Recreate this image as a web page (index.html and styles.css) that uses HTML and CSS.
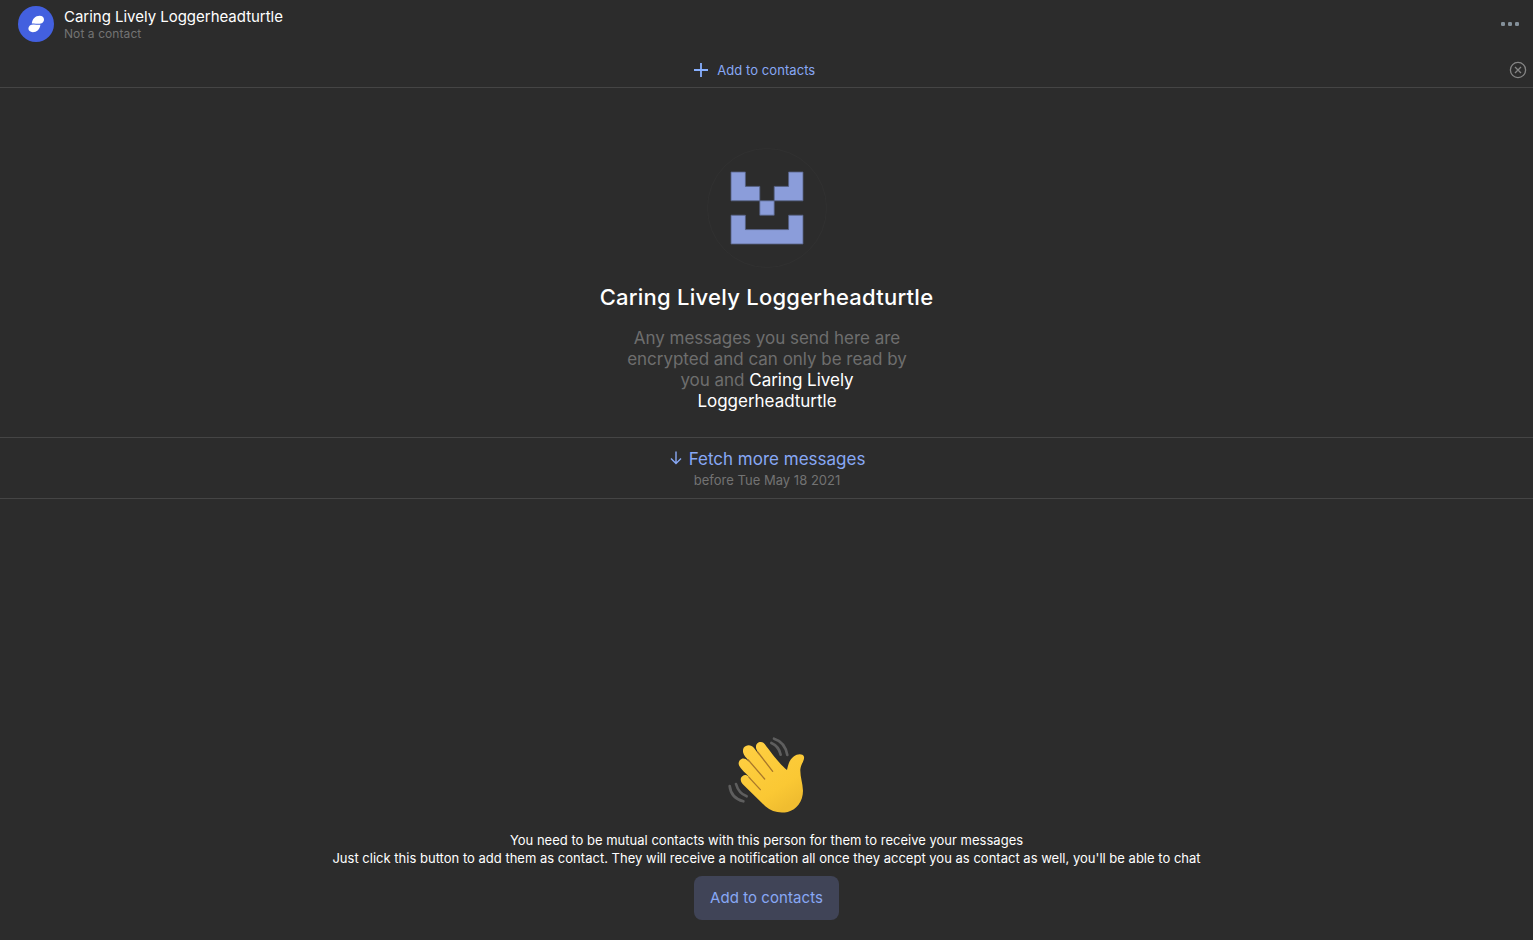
FILE: index.html
```html
<!DOCTYPE html>
<html lang="en">
<head>
<meta charset="utf-8">
<title>Chat</title>
<link rel="stylesheet" href="styles.css">
</head>
<body>
<div class="chat">
  <header class="toolbar">
    <svg class="avatar" viewBox="0 0 36 36"><circle cx="18" cy="18" r="18" fill="#4360df"/><path d="M13.8 17.6C14.2 13 17.4 9.8 21.6 9.8C24.4 9.8 26 11.3 26 13.4C26 16.2 23.6 18 20.2 17.8C17.6 17.6 16 17.1 13.8 17.6Z" fill="#fff"/><path d="M22.4 18.7C22 23.2 18.9 26.2 14.8 26.2C12.1 26.2 10.4 24.7 10.4 22.6C10.4 19.9 12.8 18.3 16 18.5C18.5 18.7 20.2 19.1 22.4 18.7Z" fill="#fff"/></svg>
    <div class="identity">
      <div class="name">Caring Lively Loggerheadturtle</div>
      <div class="status">Not a contact</div>
    </div>
    <svg class="more" viewBox="0 0 18 4"><rect width="4" height="4" rx="1.3"/><rect x="7" width="4" height="4" rx="1.3"/><rect x="14" width="4" height="4" rx="1.3"/></svg>
  </header>
  <div class="contact-bar">
    <div class="contact-add">
      <svg class="plus" viewBox="0 0 14 14"><path d="M7 0V14M0 7H14"/></svg>
      <span class="contact-label">Add to contacts</span>
    </div>
    <svg class="close" viewBox="0 0 18 18"><circle cx="9" cy="9" r="7.6"/><path d="M6 6L12 12M12 6L6 12"/></svg>
  </div>
  <section class="intro">
    <svg class="identicon" viewBox="0 0 120 120"><circle cx="60" cy="60" r="59.5" fill="none" stroke="#313131" stroke-width=".9"/><path d="M24 24H38.4V38.4H52.8V52.8H67.2V38.4H81.6V24H96V52.8H67.2V67.2H52.8V52.8H24ZM24 67.2H38.4V81.6H81.6V67.2H96V96H24Z" fill="#8b9dda" stroke="#566184" stroke-width=".8"/></svg>
    <h1 class="title">Caring Lively Loggerheadturtle</h1>
    <p class="notice">Any messages you send here are<br>encrypted and can only be read by<br>you and <span class="who">Caring Lively<br>Loggerheadturtle</span></p>
  </section>
  <section class="fetch">
    <div class="fetch-link"><svg class="arrow" viewBox="0 0 12 14"><path d="M6 0.5V12.5M1 7.5L6 12.5L11 7.5"/></svg><span class="fetch-label">Fetch more messages</span></div>
    <div class="before">before Tue May 18 2021</div>
  </section>
  <footer class="request">
    <svg class="wave" viewBox="0 0 300 300">
      <defs><linearGradient id="skin" x1="0" y1="0" x2=".6" y2="1"><stop offset="0" stop-color="#ffd044"/><stop offset=".75" stop-color="#fac834"/><stop offset="1" stop-color="#f0bd30"/></linearGradient></defs>
      <g fill="none" stroke="#5e5e5e" stroke-width="8" stroke-linecap="round"><path d="M171 38Q204 48 211 87"/><path d="M163 51Q186 61 191 86"/><path d="M38 180Q42 216 79 226"/><path d="M57 174Q65 202 89 211"/></g>
      <path d="M77 150C68 156 70 168 79 176L145 241C164 257 186 263 212 258C239 250 258 226 258 194C257 171 249 152 250 130C252 113 263 104 261 92C257 82 240 84 231 91C217 101 214 115 210 132C190 117 160 77 143 54C131 41 112 52 118 69L126 86L111 66C102 54 87 56 80 65C75 75 79 86 89 97L99 109L86 99C75 93 64 103 65 114C67 125 81 137 96 152L104 160L95 152C89 146 82 146 77 150Z" fill="url(#skin)"/>
      <g fill="none" stroke="#a9782a" stroke-width="4" stroke-linecap="round"><path d="M122 78L167 136"/><path d="M93 101L143 159"/><path d="M96 154L130 191"/></g>
    </svg>
    <p class="explain"><span class="line1">You need to be mutual contacts with this person for them to receive your messages</span><br><span class="line2">Just click this button to add them as contact. They will receive a notification all once they accept you as contact as well, you'll be able to chat</span></p>
    <button class="add-button">Add to contacts</button>
  </footer>
</div>
</body>
</html>
```
FILE: styles.css
```css
* { box-sizing: border-box; }
body { margin: 0; background: #2c2c2c; color: #fff; font-family: Inter, sans-serif; white-space: nowrap; }
svg { display: block; flex: none; }
p, h1 { margin: 0; }
.chat { height: 940px; display: flex; flex-direction: column; overflow: hidden; }
.toolbar { height: 52px; padding: 6px 14px 0 18px; display: flex; align-items: flex-start; }
.avatar { width: 36px; height: 36px; }
.identity { margin-left: 10px; flex: 1; }
.name { padding-top: 1px; font-size: 15px; line-height: 19px; letter-spacing: -0.02px; }
.status { font-size: 12px; line-height: 15px; letter-spacing: 0.08px; color: #737373; }
.more { width: 18px; height: 4px; margin-top: 16px; fill: #84909a; }
.contact-bar { height: 36px; border-bottom: 1px solid #454545; display: flex; align-items: center; padding-right: 6px; }
.contact-add { flex: 1; display: flex; align-items: center; justify-content: center; gap: 9.5px; color: #88a8f5; }
.plus { width: 14px; height: 14px; fill: none; stroke: #88b0ff; stroke-width: 1.8; }
.contact-label { font-size: 13px; line-height: 18px; letter-spacing: 0.07px; }
.close { width: 18px; height: 18px; fill: none; stroke: #858585; stroke-width: 1.3; }
.intro { height: 349px; padding-top: 60px; display: flex; flex-direction: column; align-items: center; text-align: center; }
.identicon { width: 120px; height: 120px; }
.title { margin-top: 16px; font-size: 22px; line-height: 27px; font-weight: 500; letter-spacing: 0.25px; }
.notice { margin-top: 17px; padding-left: 1px; font-size: 17px; line-height: 21px; letter-spacing: -0.02px; color: #6e6e6e; }
.who { color: #fff; }
.fetch { height: 62px; border: solid #454545; border-width: 1px 0; padding: 10px 0 0 1px; display: flex; flex-direction: column; align-items: center; }
.fetch-link { display: flex; align-items: center; gap: 7px; padding-left: 1px; color: #88a8f5; font-size: 17px; line-height: 22px; }
.arrow { width: 12px; height: 14px; margin-bottom: 2px; fill: none; stroke: #88a8f5; stroke-width: 1.4; }
.before { font-size: 13px; line-height: 20px; letter-spacing: 0.02px; color: #737373; }
.request { margin-top: auto; padding-bottom: 20px; display: flex; flex-direction: column; align-items: center; text-align: center; }
.wave { width: 100px; height: 100px; }
.explain { margin-top: 5px; font-size: 13px; line-height: 18px; letter-spacing: 0.01px; }
.add-button { margin: 9px 0 0; width: 145px; height: 44px; border: 0; border-radius: 8px; background: #404457; color: #88a8f5; font: 15px Inter, sans-serif; letter-spacing: 0.07px; padding: 0 0 2px; }
```
